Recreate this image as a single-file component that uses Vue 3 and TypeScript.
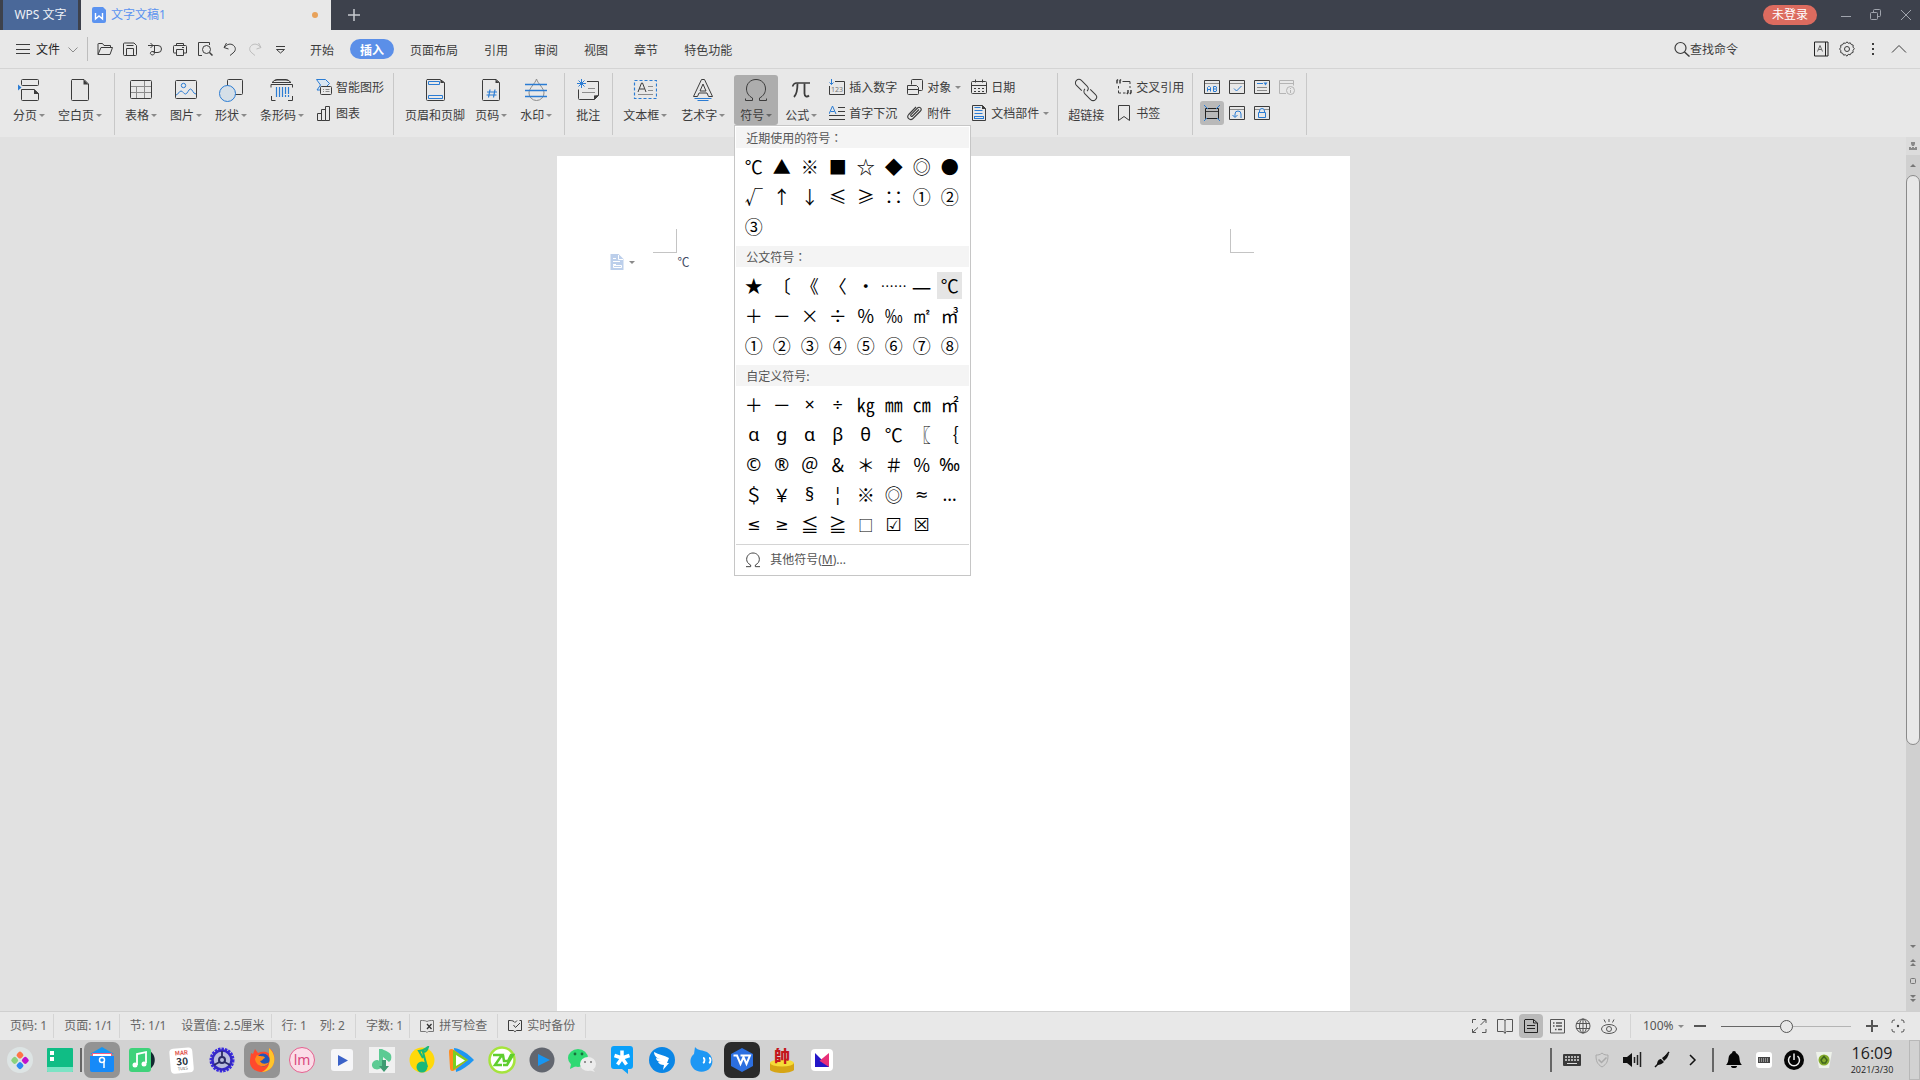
<script setup lang="ts">
import { h, ref } from 'vue'

interface IconDef {
  size: number
  body: string
}

const K = '#3c3c3c'
const B = '#2b7cd3'
const G = '#8c8c8c'

const L = (body: string): IconDef => ({ size: 24, body })
const S = (body: string): IconDef => ({ size: 16, body })
const T = (body: string): IconDef => ({ size: 28, body })

const icons: Record<string, IconDef> = {
  // large ribbon icons
  pageBreak: L(`<rect x="4.500" y="1.500" width="17" height="6" rx="1" stroke="${K}"/><path d="M4.500 11.500h12.500l4.500 4v6a1 1 0 0 1-1 1h-15a1 1 0 0 1-1-1z" stroke="${K}"/><path d="M17 11l5 5h-5z" fill="${K}"/><path d="M1 6.500l3.500 3-3.500 3z" fill="${B}"/>`),
  blankPage: L(`<path d="M4 1.500h12l4.500 4.500v15.500a1 1 0 0 1-1 1h-15a1 1 0 0 1-1-1v-19a1 1 0 0 1 1-1z" stroke="${K}"/><path d="M15.500 1.500v5h5z" fill="${K}"/>`),
  table: L(`<path d="M1.500 8.500h21M1.500 14.500h21M7.500 8v12.500M15.500 2.500v18" stroke="${G}"/><rect x="1.500" y="2.500" width="21" height="18" rx="1" stroke="${K}"/>`),
  picture: L(`<rect x="1.500" y="2.500" width="21" height="18" rx="1" stroke="${K}"/><circle cx="9.500" cy="7.500" r="2.200" stroke="${B}"/><path d="M2 17c2 0 3-4 5-4s2.500 3 4.500 3 3-5 5-5 2.500 5 5.500 5" stroke="${B}"/>`),
  shapes: L(`<rect x="8.500" y="1.500" width="15" height="15" rx="1" stroke="${K}"/><circle cx="8.500" cy="15.500" r="8" fill="#d5dfe8" stroke="${B}"/>`),
  barcode: L(`<path d="M2 4.500l3-2.500h13l3 2.500zM5 2.500l2-1h9l2 1" stroke="${K}"/><path d="M1 9.500v-3h21.500v3M1.500 18v4.500h4M18 22.500h4.500v-4.500" stroke="${K}"/><path d="M6.500 9v10M9.500 9v10M12.500 9v10M15.500 9v7M15.500 17v2M18.500 9v7M18.500 17v2" stroke="${B}" stroke-width="1.200"/>`),
  headerFooter: L(`<path d="M4 1.500h13l4.500 3v17a1 1 0 0 1-1 1h-16a1 1 0 0 1-1-1v-19a1 1 0 0 1 .5-1z" stroke="${K}"/><path d="M17.500 1.500v3.500h4z" fill="${K}"/><path d="M5.500 3.500h11v3h-11zM5.500 17.500h14v3h-14z" stroke="${B}"/>`),
  pageNumber: L(`<path d="M4 1.500h13l3.500 3v17a1 1 0 0 1-1 1h-15a1 1 0 0 1-1-1v-19a1 1 0 0 1 .5-1z" stroke="${K}"/><path d="M16.500 1.500v3.500h4z" fill="${K}"/><path d="M11 11.500l-1.500 8M16 11.500l-1.500 8M8 14h10M7.500 17h10" stroke="${B}" stroke-width="1.200"/>`),
  watermark: L(`<path d="M12.500 1c1.500 5 7.500 9 7.500 14a7.500 7.500 0 0 1-15 0c0-5 6-9 7.500-14z" stroke="${G}"/><path d="M1 6.500h22M1 12.500h22M1 18.500h22" stroke="${B}" stroke-width="1.300"/>`),
  comment: L(`<path d="M11 3.500h11.500v14l-4 4h-15a1 1 0 0 1-1-1v-9" stroke="${K}"/><path d="M23 17l-5 5v-4.500z" fill="${K}"/><path d="M12 10.500h7M6 14.500h13" stroke="${G}"/><path d="M5.500 1v9M1 5.500h9M2.500 2.500l6 6M8.500 2.500l-6 6" stroke="${B}"/>`),
  textBox: L(`<rect x="1.500" y="2.500" width="22" height="18" stroke="${B}" stroke-dasharray="3 2" stroke-width="1.200"/><path d="M5 14l3.500-9h1l3.500 9M6.500 11h5" stroke="${K}"/><path d="M15 8.500h5M15 12.500h5M5 16.500h15" stroke="${G}"/>`),
  wordArt: L(`<path d="M2.500 18.500L10.500 1.500h3L21.500 18.500h-4l-1.500-3.500H8L6.500 18.500z" stroke="${K}" stroke-linejoin="round"/><path d="M12 6l-3 7h6z" stroke="${K}"/><path d="M3.500 20.500h17M6.500 22.500h11" stroke="${B}"/>`),
  omega: L(`<path d="M1.500 22.500h7v-2.500C4.500 18 2.500 14.500 2.500 11c0-5.500 4-9.500 9.500-9.500s9.500 4 9.500 9.500c0 3.500-2 7-6 9v2.500h7M1.500 22.500v-2M22.500 22.500v-2" stroke="${K}"/>`),
  pi: L(`<path d="M3.500 8.500c1-3 2.500-3.500 4-3.500h13.500" stroke="${K}" stroke-width="1.500"/><path d="M8.500 5.500c0 7-1 11-3.500 13.500M15.500 5.500v10c0 3 2.500 4 4.500 2" stroke="${K}" stroke-width="1.800"/>`),
  link: L(`<g transform="rotate(45 12 12)" stroke="${K}"><path d="M9.500 15.500H2a3.500 3.500 0 0 1 0-7h8a3.500 3.500 0 0 1 3.500 3.500"/><path d="M14.500 8.500H22a3.500 3.500 0 0 1 0 7h-8a3.500 3.500 0 0 1-3.500-3.500"/></g>`),

  // small ribbon icons
  smartArt: S(`<path d="M.5.500h9l4 4-3 3H5.500V11H1l3.500-5z" fill="#d9e6f2" stroke="${B}"/><rect x="4.500" y="7.500" width="11" height="8" rx="1" fill="#e8e8e8" stroke="${K}"/><path d="M7 10.500h1M9.500 10.500h4M7 12.500h1M9.500 12.500h4" stroke="${G}"/>`),
  chart: S(`<path d="M1.500 15.500v-7h4v7zM5.500 15.500v-11h4v11zM9.500 15.500v-14h4v14z" stroke="${K}" stroke-linejoin="round"/>`),
  insertNum: S(`<path d="M6 2.500h9.500v13H.5V7" stroke="${K}"/><path d="M2.500 0v5.500M.5 3.500l2 2 2-2" stroke="${B}"/><text x="8" y="12.500" text-anchor="middle" font-family="Noto Sans" font-size="7" fill="#777">123</text>`),
  dropCap: S(`<path d="M0 9l3.500-8L7 9M1.500 6.500h4" stroke="${B}"/><path d="M9 2.500h7M9 6.500h7M0 10.500h16M0 14.500h16" stroke="${K}"/>`),
  object: S(`<path d="M4.500 5.500v-4a1 1 0 0 1 1-1h9a1 1 0 0 1 1 1v9a1 1 0 0 1-1 1h-3" stroke="${K}"/><path d="M.5 6.500h9l2 2v6a1 1 0 0 1-1 1H1.500a1 1 0 0 1-1-1zM.5 10.500h11" stroke="${K}"/>`),
  clip: S(`<path d="M12 4.500l-6.500 6.500c-1 1-2.500-.3-1.500-1.500L10.500 3c2-2 5 .8 3 3L6 13.500c-3 2.800-7-1-4.300-4L9 2" stroke="${K}" stroke-width="1.100"/>`),
  date: S(`<rect x=".5" y="2.500" width="15" height="12" rx="1" stroke="${K}"/><path d="M1 6.500h14" stroke="${K}"/><path d="M4.500.500v3M11.500.500v3M3 9.500h2M7 9.500h2M11 9.500h2M3 12.500h2M7 12.500h2M11 12.500h2" stroke="${K}"/>`),
  docPart: S(`<path d="M1.500.500h10l3 3v12h-13z" stroke="${K}"/><path d="M11 0l4 4h-4z" fill="${K}"/><path d="M3.500 2.500h6M3.500 5.500h8M3.500 8.500h8" stroke="${B}"/><rect x="3.500" y="11.500" width="9" height="2" stroke="${B}"/>`),
  crossRef: S(`<path d="M6.500 2.500h7.500v2.500M14 7v2M2.500 7v2.500M2.500 11.500v2.500h2.500M7 14h2.500" stroke="${K}"/><path d="M1 4.500v-3l1-1M4 4.500v-3l1-1M15 11v2.500l-1 1.500M12 11v2.500l-1 1.500" stroke="${K}" stroke-width="1.500"/>`),
  bookmark: S(`<path d="M2.500.500h11v15l-5.500-4-5.500 4z" stroke="${K}"/>`),
  fieldAB: S(`<path d="M.5 1.500h15v13H.5z" stroke="${K}"/><path d="M1 4.500h14" stroke="${G}"/><path d="M3.500 12.500v-4l1-1h1l1 1v4M3.500 10.500h3M9.500 7.500v5h2.500l.5-.5v-1.500l-.5-.5.5-.5v-1.500l-.5-.5h-2.500M9.500 10h2.500" stroke="${B}"/>`),
  fieldCheck: S(`<path d="M.5 1.500h15v13H.5z" stroke="${K}"/><path d="M1 4.500h14" stroke="${G}"/><path d="M5 9.500l2.500 2.500 5-5" stroke="${B}"/>`),
  fieldList: S(`<path d="M.5 1.500h15v13H.5z" stroke="${K}"/><path d="M3 4.500h6" stroke="${B}"/><path d="M9.500 3.500h4l-2 3z" fill="${B}"/><path d="M3 8.500h10M3 11.500h10" stroke="${G}"/>`),
  fieldInfo: S(`<path d="M7 14.500H.5v-13h14v5M1 4.500h14" stroke="#b4b4b4"/><circle cx="11.500" cy="11.500" r="4" stroke="#b4b4b4"/><path d="M11.500 9v1M11.500 11v3" stroke="#b4b4b4"/>`),
  fieldFrame: S(`<path d="M1.500 3.500h13v10h-13z" stroke="#222"/><path d="M2 6.500h12" stroke="${K}"/><path d="M0 0l4 4M16 0l-4 4M0 16l3-3M16 16l-3-3" stroke="${B}"/>`),
  fieldReset: S(`<path d="M.5 1.500h15v13H.5z" stroke="${K}"/><path d="M1 4.500h14" stroke="${G}"/><path d="M3.500 10l2.500 2.500 2.500-2.500M6 12V9a3 3 0 0 1 6 0v4" stroke="${B}"/>`),
  fieldLock: S(`<path d="M.5 1.500h15v13H.5z" stroke="${K}"/><path d="M1 4.500h14" stroke="${G}"/><path d="M4.500 7.500h7v5h-7zM5.500 7.500V6a2.500 2.500 0 0 1 5 0v1.500" fill="#e8e8e8" stroke="${B}"/>`),

  // quick access icons
  menu: S(`<path d="M1 3.500h14M1 8.500h14M1 12.500h14" stroke="${K}"/>`),
  chevDown: S(`<path d="M3.500 6.500l4.500 4.500 4.500-4.500" stroke="${G}"/>`),
  open: S(`<path d="M1 13.500V3a.5.500 0 0 1 .5-.5h4l1.500 2h6.500v2.500M1 13.500h12l2.500-7H4z" stroke="${K}" stroke-linejoin="round"/>`),
  save: S(`<path d="M2.500 2h9.500l2.500 2.500v9a1 1 0 0 1-1 1h-11a1 1 0 0 1-1-1V3a1 1 0 0 1 1-1zM4.500 14V7.500h7V14M4.500 4.500h7" stroke="${K}"/>`),
  pdf: S(`<path d="M1 4.500h10a3.500 3.500 0 0 1 0 7H6.500M3.500 2L6 4.500 3.500 7M7.500 4.500v7c0 4-5 2.500-4 0 .5-1 2-1 4-1" stroke="${K}"/>`),
  print: S(`<path d="M4.500 5V2.500h7V5M4 12H2a.5.500 0 0 1-.5-.5V5.500a1 1 0 0 1 1-1h11a1 1 0 0 1 1 1V12h-2.500M4.500 8.500h7v6h-7z" stroke="${K}"/><path d="M10 6.500h2" stroke="${K}"/>`),
  preview: S(`<path d="M5 14.500H1.500v-13h11V4" stroke="${K}"/><circle cx="9.500" cy="8.500" r="4" stroke="${K}"/><path d="M12.500 11.500l3 3" stroke="${K}" stroke-width="1.500"/>`),
  undo: S(`<path d="M4.500 2l-2.500 4.500 4.500 1.500M2.500 6.500c2-3 5-4 7.500-3 4 1.800 4.500 6 1 8.500L8 14.500" stroke="${K}"/>`),
  redo: S(`<path d="M11.500 2l2.500 4.500-4.500 1.500M13.500 6.500c-2-3-5-4-7.500-3-4 1.800-4.500 6-1 8.500L8 14.500" stroke="#bdbdbd"/>`),
  moreDown: S(`<path d="M4 5.500h9M4.500 8.500l4 3.500 4-3.500z" stroke="${K}"/>`),
  search: S(`<circle cx="6.500" cy="7" r="5.500" stroke="${K}" stroke-width="1.200"/><path d="M10.500 11l5 4.500" stroke="${K}" stroke-width="1.500"/>`),
  layoutA: S(`<path d="M1.500 1h13.500v14h-13.500zM12.500 1v14" stroke="#222"/><path d="M4.500 10.500l2.500-6 2.500 6M5.500 8.500h3" stroke="#666"/>`),
  gear: S(`<circle cx="8" cy="8" r="2.500" stroke="${K}"/><path d="M8 .8l1.300 1.500 2-.5.9 1.700 2 .6-.2 2 1.300 1.600-1.300 1.700.1 2-1.900.7-1 1.700-2-.5L8 15.200l-1.500-1.400-2 .3-.8-1.800-2-.7.1-2L.6 8l1.200-1.700-.1-2 2-.6.9-1.700 2 .3z" stroke="${K}" stroke-linejoin="round"/>`),
  dots: S(`<path d="M7 2h2v2H7zM7 7h2v2H7zM7 12h2v2H7z" fill="${K}"/>`),
  chevUp: S(`<path d="M1 11.500l7-7 7 7" stroke="${K}"/>`),
  plus: S(`<path d="M2 8h12M8 2v12" stroke="#c8cad0" stroke-width="1.500"/>`),
  minimize: S(`<path d="M3 9.500h10" stroke="#a0a4ad"/>`),
  restore: S(`<rect x="2.500" y="5.500" width="7" height="7" rx="1" stroke="#a0a4ad"/><path d="M5.500 5.500v-2a1 1 0 0 1 1-1h5a1 1 0 0 1 1 1v5a1 1 0 0 1-1 1h-2" stroke="#a0a4ad"/>`),
  close: S(`<path d="M3 3l10 10M13 3L3 13" stroke="#a0a4ad"/>`),
  wdoc: S(`<path d="M3 0h9l3 3v11a2 2 0 0 1-2 2H3a2 2 0 0 1-2-2V2a2 2 0 0 1 2-2z" fill="#5b93f0"/><path d="M4.500 6v6l3.500-3 3.500 3V6" stroke="#fff" stroke-width="1.400"/>`),

  // status bar icons
  spell: S(`<path d="M8 3.500c-1.500-1-4-1-6.500-1v11h5c1 0 1 1 1.500 1s.5-1 1.500-1h5v-11c-2.500 0-5 0-6.500 1z" stroke="#777"/><path d="M8 6l4.500 5M12.500 6L8 11" stroke="#333" stroke-width="1.300"/>`),
  backup: S(`<path d="M7 3.500c-1.500-1-3-1-5.500-1v10h5c1 0 1 1.500 1.500 1.500s.5-1.500 1.500-1.500h5v-10h-2M7 3.500l1 1 2-2" stroke="${K}"/><path d="M6.500 7l2 2.500 4.500-4.500" stroke="${K}"/>`),
  full: S(`<path d="M1.500 5V1.500H5M11 1.500h4V5M15 11v3.500h-4M5 14.500H1.500V11M9.500 7l5-5M7 9.500l-5.500 5" stroke="#555"/>`),
  book: S(`<path d="M8 15.500V2.500L6.500 1.500h-6v12h6zM8 2.500l1.500-1h6v12h-6L8 15" stroke="#555"/>`),
  pageView: S(`<path d="M2 1.500h8.500L14.500 5v9.500H1.500V2zM10.500 1.500V5h4M4 7.500h8M4 10.500h8" stroke="#222"/>`),
  outline: S(`<path d="M1.500 1.500h14v13.500h-14z" stroke="#555"/><path d="M4 5h1.500M4 8h1.500M6 11.500h1.500M7 5h6M7 8h6M9 11.500h4" stroke="#555" stroke-width="1.300"/>`),
  globe: S(`<circle cx="8" cy="8" r="7" stroke="#555"/><ellipse cx="8" cy="8" rx="3.500" ry="7" stroke="#555"/><path d="M1 5.500h14M1 10.500h14M8 1v14" stroke="#555"/>`),
  eye: S(`<ellipse cx="8" cy="11" rx="7.500" ry="4.500" stroke="#555"/><circle cx="8" cy="11" r="2.500" stroke="#555"/><path d="M8 1v3M3 1.500l1.500 3M13 1.500l-1.500 3" stroke="#555"/>`),
  minusBold: S(`<path d="M2 8h12" stroke="#555" stroke-width="2"/>`),
  plusBold: S(`<path d="M2 8h12M8 2v12" stroke="#555" stroke-width="2"/>`),
  focus: S(`<path d="M2 5V4a2 2 0 0 1 2-2h1M11 2h1a2 2 0 0 1 2 2v1M14 11v1a2 2 0 0 1-2 2h-1M5 14H4a2 2 0 0 1-2-2v-1" stroke="#555"/><circle cx="8" cy="8" r="1.200" fill="#444"/>`),
  para: S(`<path d="M1.500 0h8l5 5v11h-13z" fill="#bccfeb"/><path d="M9.500 1v4.500h4.500M4 4.500h3M4 7.500h7M4 10.500h3M4.500 11.500h8v2h-8z" stroke="#fff"/>`),

  // taskbar application icons
  launcher: T(`<circle cx="14" cy="14" r="13" fill="#dde4e4"/><g transform="rotate(45 14 14)"><rect x="7.500" y="7.500" width="6" height="6" rx="2" fill="#ff7446"/><rect x="15" y="7.500" width="6" height="6" rx="2" fill="#c012cc"/><rect x="7.500" y="15" width="6" height="6" rx="2" fill="#8ad27c"/><rect x="15" y="15" width="6" height="6" rx="2" fill="#2c88f2"/></g>`),
  multitask: T(`<rect x="1" y="2" width="26" height="24" rx="1" fill="#10bd85"/><path d="M1 21h26v4a1 1 0 0 1-1 1H2a1 1 0 0 1-1-1z" fill="#7be3c4"/><path d="M4 5h4v4H4zM4 11h4v4H4z" fill="#fff"/>`),
  files: T(`<path d="M2 8l12-7 12 7z" fill="#1597f5"/><path d="M4 7h20v6H4z" fill="#f65c82"/><path d="M5 8h18v6H5z" fill="#fff"/><path d="M2 10h24v14a2 2 0 0 1-2 2H4a2 2 0 0 1-2-2z" fill="#168af8"/><circle cx="14" cy="14" r="2.500" stroke="#fff" stroke-width="1.500"/><path d="M16 15v7" stroke="#fff" stroke-width="1.500"/>`),
  music: T(`<path d="M20 4c9 4 9 16 0 20z" fill="#142830"/><rect x="1" y="2" width="22" height="24" rx="3" fill="#3fd27a"/><path d="M9 19V8l9-2v11" stroke="#fff" stroke-width="1.800"/><circle cx="7" cy="19" r="2.500" fill="#fff"/><circle cx="16" cy="18" r="2.500" fill="#fff"/>`),
  calendar: T(`<g transform="rotate(-5 14 14)"><rect x="2" y="2" width="23" height="25" rx="4" fill="#fff"/><text x="14" y="9" text-anchor="middle" font-size="6" font-weight="700" fill="#e0524a">MAR</text><text x="14" y="19" text-anchor="middle" font-size="10" font-weight="700" fill="#26323f">30</text><text x="14" y="24" text-anchor="middle" font-size="4" fill="#555">TUES</text></g>`),
  settings: T(`<circle cx="14" cy="14" r="11" stroke="#3a2be2" stroke-width="3" stroke-dasharray="2.400 1"/><circle cx="14" cy="14" r="9.500" fill="#b9bcdc" stroke="#3427c4" stroke-width="2.500"/><circle cx="14" cy="14" r="3" stroke="#2b2b66" stroke-width="2"/><path d="M14 11V5M11.500 16L6 19M16.500 16l5.500 3" stroke="#2b2b66" stroke-width="1.800"/>`),
  firefox: T(`<path d="M3 7l2 1 2-5 3 4c6-3 12 0 13 3l-2-8c5 3 6 9 5 14-2 8-8 10-13 10S1 22 2 14z" fill="#ff4a2d"/><path d="M21 2c6 5 7 13 3 19-3 4-8 5-10 5 6-3 9-9 7-17z" fill="#ffc52b"/><circle cx="15" cy="14" r="6.500" fill="#2255b8"/><path d="M9 9c3 2 7 0 8 3-2 0-2 3-5 3 2 4 7 3 9 1-3 7-13 5-14-3z" fill="#ff8a1c"/>`),
  lm: T(`<circle cx="14" cy="14" r="12.500" fill="#fbdde8" stroke="#e5608f"/><text x="14" y="19" text-anchor="middle" font-family="Noto Sans" font-size="14" fill="#d9487e">lm</text>`),
  player: T(`<rect x="3" y="3" width="22" height="22" rx="3" fill="#f6f6f8"/><path d="M10 9l10 5.500L10 20z" fill="#3b62c8"/>`),
  download: T(`<rect x="1" y="1" width="26" height="26" fill="#f0f0f0"/><path d="M14 3c5 3 11 3 9 11l-2 2-6-5v8c-1 6-12 6-11-1 1-4 6-5 7-3V3z" fill="#5ccb93"/><path d="M14 14h4v6h3l-5 6-5-6h3z" fill="#3e9b72"/>`),
  qqmusic: T(`<circle cx="14" cy="14" r="12.500" fill="#ffd90a"/><path d="M15 12l-4-7c5 0 6-2 9-4-1 4-2 5-5 5l4 15" stroke="#18b87a" stroke-width="2"/><circle cx="14" cy="21" r="5.500" fill="#18b87a"/>`),
  tencent: T(`<path d="M6 2c8 1 14 6 20 12-6 6-12 10-18 12z" fill="#1d97f3"/><path d="M1 6c0-4 3-3 5-2l14 10L7 24c-3 2-5 1-5-2z" fill="#ff8c1c"/><path d="M5 4l15 10L5 24z" fill="#78d01f"/><path d="M8 9l9 5.500L8 20z" fill="#fff"/>`),
  zy: T(`<circle cx="14" cy="14" r="12.500" fill="#fff" stroke="#a5e43c" stroke-width="2.500"/><path d="M5 9h9L7 19h7M15 9l1 6h4l3-6h2l-6 10h-4" stroke="#5fce2f" stroke-width="2.500"/>`),
  video: T(`<circle cx="14" cy="14" r="12.500" fill="#62666f"/><path d="M10 8l12 6-12 6z" fill="#1796f2"/>`),
  wechat: T(`<ellipse cx="10" cy="12" rx="10" ry="9" fill="#2fd973"/><path d="M3 18l-1 5 6-3z" fill="#2fd973"/><circle cx="7" cy="8" r="1.400" fill="#18703c"/><circle cx="14" cy="8" r="1.400" fill="#18703c"/><ellipse cx="20" cy="18" rx="8" ry="7" fill="#ececec"/><path d="M24 22l3 4-6-2z" fill="#ececec"/><circle cx="17" cy="16" r="1" fill="#777"/><circle cx="23" cy="16" r="1" fill="#777"/>`),
  star: T(`<path d="M6 0h16a3 3 0 0 1 3 3v17a3 3 0 0 1-3 3h-2v5l-6-5H6a3 3 0 0 1-3-3V3a3 3 0 0 1 3-3z" fill="#0aa0fa"/><path d="M14 12V4.500M14 12l7.500-2.500M14 12l4.500 6.500M14 12l-4.500 6.500M14 12L6.500 9.500" stroke="#fff" stroke-width="3.500"/>`),
  dingtalk: T(`<circle cx="14" cy="14" r="13" fill="#0a86e6"/><path d="M6 6c5 3 10 3 15 6l-2 5h2l-6 7 1-5c-3 0-5-1-6-3l3 0c-3 0-5-2-5-4l4 1c-4-1-6-4-6-7z" fill="#fff"/>`),
  drop: T(`<path d="M7 1c3 4 8 3 12 5 6 4 7 11 3 16s-13 5-17 0C1 17 2 11 6 8z" fill="#1d97f4"/><path d="M15 12c2 0 2 4 0 5M21 12c2 0 2 4 0 5" stroke="#fff" stroke-width="1.800"/>`),
  wps: T(`<path d="M14 2l11 6v12l-11 6-11-6V8z" fill="#2c6fe0"/><path d="M5.500 9.500h3.500l3.500 8.500 3-7 3 7 3.500-8.500H12.500" stroke="#fff" stroke-width="2"/>`),
  chess: T(`<path d="M2 17h24v7c-4 4-20 4-24 0z" fill="#d6a514"/><ellipse cx="14" cy="17" rx="12" ry="3.500" fill="#f6dc38"/><text x="14" y="16" text-anchor="middle" font-size="16" font-weight="900" fill="#c4171c">帥</text>`),
  mail: T(`<rect x="3" y="3" width="22" height="22" rx="4" fill="#fff"/><path d="M7 7l14 14H7z" fill="#2416c8"/><path d="M21 7L10 16l4 5h7z" fill="#e82f78"/><path d="M7 12v9h14z" fill="#2416c8"/>`),

  // tray icons
  keyboard: T(`<rect x="5" y="8" width="18" height="12" rx="1" fill="#3a3a3a"/><path d="M7 11h14M7 14h14" stroke="#ddd" stroke-width="1.500" stroke-dasharray="2 1"/><path d="M9 17.500h10" stroke="#ddd"/>`),
  shield: T(`<path d="M14 7c2 2 4 2 6 2 0 6-1 9-6 12-5-3-6-6-6-12 2 0 4 0 6-2z" stroke="#aaa"/><path d="M10.500 13.500l3 3 5-5" stroke="#aaa" stroke-width="1.500"/>`),
  speaker: T(`<path d="M5 11h4l5-4v14l-5-4H5z" fill="#111"/><path d="M16.500 11v6M19.500 9v10M22.500 6v15" stroke="#222" stroke-width="1.500"/>`),
  plug: T(`<path d="M7 21l4-4M17 11l4-5" stroke="#111" stroke-width="1.500"/><path d="M9 19c0-4 2-6 4-6l3 3c-2 2-4 3-7 3zM14 12l4-3 3-1-2 4-3 3z" fill="#111"/>`),
  chevRight: T(`<path d="M12 9l5 5-5 5" stroke="#111" stroke-width="1.500"/>`),
  bell: T(`<path d="M6 19c3-3 2-6 3-9 1-2 3-3 3-3a2 2 0 0 1 4 0s2 1 3 3c1 3 0 6 3 9zM11 20h6a3 2 0 0 1-6 0z" fill="#050505"/>`),
  keyboardW: T(`<rect x="6" y="6" width="16" height="16" rx="3" fill="#fff"/><rect x="8" y="11" width="12" height="6" fill="#444"/><path d="M9 13h10M9 15h10" stroke="#ddd" stroke-dasharray="1 1"/>`),
  power: T(`<circle cx="14" cy="14" r="10" fill="#050505"/><path d="M10.500 10a5.500 5.500 0 1 0 7 0M14 7.500V14" stroke="#eee" stroke-width="1.500"/>`),
  bin: T(`<path d="M6 6h16l-3 16H9z" fill="#eef2ea"/><circle cx="14" cy="14" r="5.500" fill="#84ab2c"/><path d="M11 14l3-3.500 3 3.500-1.500 3h-3z" stroke="#3f661c" stroke-width="1.500"/>`),
}

const Icon = (props: { name: string }) => {
  const d = icons[props.name]
  return h('svg', {
    class: 'icon',
    width: d.size,
    height: d.size,
    viewBox: `0 0 ${d.size} ${d.size}`,
    fill: 'none',
    'aria-hidden': 'true',
    innerHTML: d.body,
  })
}
Icon.props = ['name']

interface Tool {
  label: string
  icon: string
  arrow?: boolean
}

const quick = [
  ['open', '打开'], ['save', '保存'], ['pdf', '输出为PDF'], ['print', '打印'],
  ['preview', '打印预览'], ['undo', '撤销'], ['redo', '恢复'], ['moreDown', '自定义快速访问工具栏'],
]
const tabs = ['开始', '插入', '页面布局', '引用', '审阅', '视图', '章节', '特色功能']
const activeTab = ref('插入')

const pageTools: Tool[] = [
  { label: '分页', icon: 'pageBreak', arrow: true },
  { label: '空白页', icon: 'blankPage', arrow: true },
]
const mediaTools: Tool[] = [
  { label: '表格', icon: 'table', arrow: true },
  { label: '图片', icon: 'picture', arrow: true },
  { label: '形状', icon: 'shapes', arrow: true },
  { label: '条形码', icon: 'barcode', arrow: true },
]
const mediaSmall: Tool[] = [
  { label: '智能图形', icon: 'smartArt' },
  { label: '图表', icon: 'chart' },
]
const textTools: Tool[] = [
  { label: '文本框', icon: 'textBox', arrow: true },
  { label: '艺术字', icon: 'wordArt', arrow: true },
]
const smallColumns: Tool[][] = [
  [{ label: '插入数字', icon: 'insertNum' }, { label: '首字下沉', icon: 'dropCap' }],
  [{ label: '对象', icon: 'object', arrow: true }, { label: '附件', icon: 'clip' }],
  [{ label: '日期', icon: 'date' }, { label: '文档部件', icon: 'docPart', arrow: true }],
]
const linkSmall: Tool[] = [
  { label: '交叉引用', icon: 'crossRef' },
  { label: '书签', icon: 'bookmark' },
]
const fields = [
  ['fieldAB', '文字型窗体域'], ['fieldCheck', '复选框型窗体域'], ['fieldList', '下拉型窗体域'], ['fieldInfo', '窗体域选项'],
  ['fieldFrame', '窗体域底纹'], ['fieldReset', '重新设置窗体域'], ['fieldLock', '保护窗体'],
]

interface Sym {
  c: string
  k?: string
}
const sym = (text: string, k = ''): Sym[] => text.split(' ').map((c) => ({ c, k }))

const symbolGroups: { title: string; items: Sym[] }[] = [
  { title: '近期使用的符号：', items: sym('℃ ▲ ※ ■ ☆ ◆ ◎ ● √ ↑ ↓ ≤ ≥ ∷ ① ② ③') },
  {
    title: '公文符号：',
    items: [
      ...sym('★ 〔 《 〈 ·'), ...sym('……', 'tiny'), ...sym('—', 'wide'), ...sym('℃', 'hover'),
      ...sym('＋ － × ÷ ％ ‰'), ...sym('㎡', 'serif'), ...sym('㎥ ① ② ③ ④ ⑤ ⑥ ⑦ ⑧'),
    ],
  },
  {
    title: '自定义符号:',
    items: [
      ...sym('＋ －'), ...sym('× ÷', 'latin'), ...sym('㎏ ㎜ ㎝ ㎡'),
      ...sym('ɑ ɡ α β θ', 'latin'), ...sym('℃ 〖 ｛'), ...sym('© ®', 'latin'), ...sym('＠ ＆ ＊ ＃ ％'), ...sym('‰', 'latin'),
      ...sym('＄ ￥'), ...sym('§ ¦', 'latin'), ...sym('※ ◎'), ...sym('≈', 'math'), ...sym('…', 'latin'),
      ...sym('≤ ≥', 'math'), ...sym('≦ ≧'), ...sym('□', 'box'), ...sym('☑ ☒', 'check'),
    ],
  },
]

const apps: { icon: string; state?: string }[] = [
  { icon: 'files', state: 'open' }, { icon: 'music' }, { icon: 'calendar' }, { icon: 'settings' },
  { icon: 'firefox', state: 'open' }, { icon: 'lm' }, { icon: 'player' }, { icon: 'download' },
  { icon: 'qqmusic' }, { icon: 'tencent' }, { icon: 'zy' }, { icon: 'video' }, { icon: 'wechat' },
  { icon: 'star' }, { icon: 'dingtalk' }, { icon: 'drop' }, { icon: 'wps', state: 'current' },
  { icon: 'chess' }, { icon: 'mail' },
]
const tray = ['keyboard', 'shield', 'speaker', 'plug', 'chevRight']
const tray2 = ['bell', 'keyboardW', 'power', 'bin']

const views = [
  ['full', '全屏显示'], ['book', '阅读版式'], ['pageView', '页面视图'],
  ['outline', '大纲视图'], ['globe', 'Web版式'], ['eye', '护眼模式'],
]
const zoom = ref(50)
</script>

<template>
  <div class="app">
    <header class="titlebar">
      <button class="home-tab">WPS 文字</button>
      <button class="doc-tab"><Icon name="wdoc" /><span>文字文稿1</span><i class="dirty"></i></button>
      <button class="new-tab" aria-label="新建"><Icon name="plus" /></button>
      <div class="window-actions">
        <button class="login">未登录</button>
        <button class="win" aria-label="最小化"><Icon name="minimize" /></button>
        <button class="win" aria-label="还原"><Icon name="restore" /></button>
        <button class="win" aria-label="关闭"><Icon name="close" /></button>
      </div>
    </header>

    <nav class="menubar">
      <button class="file"><Icon name="menu" /><span>文件</span><Icon name="chevDown" /></button>
      <div class="quick">
        <button v-for="[icon, label] in quick" :key="icon" :aria-label="label"><Icon :name="icon" /></button>
      </div>
      <div class="tabs">
        <button v-for="t in tabs" :key="t" :class="{ active: t === activeTab }" @click="activeTab = t">{{ t }}</button>
      </div>
      <label class="find"><Icon name="search" /><input type="text" placeholder="查找命令" aria-label="查找命令" /></label>
      <div class="menu-right">
        <button aria-label="界面"><Icon name="layoutA" /></button>
        <button aria-label="设置"><Icon name="gear" /></button>
        <button aria-label="更多"><Icon name="dots" /></button>
        <button aria-label="折叠功能区"><Icon name="chevUp" /></button>
      </div>
    </nav>

    <section class="ribbon">
      <div class="group first">
        <button v-for="t in pageTools" :key="t.label" class="big"><Icon :name="t.icon" /><span class="cap">{{ t.label }}<i class="arrow"></i></span></button>
      </div>
      <div class="group media">
        <button v-for="t in mediaTools" :key="t.label" class="big"><Icon :name="t.icon" /><span class="cap">{{ t.label }}<i class="arrow"></i></span></button>
        <div class="col">
          <button v-for="t in mediaSmall" :key="t.label" class="small"><Icon :name="t.icon" />{{ t.label }}</button>
        </div>
      </div>
      <div class="group">
        <button class="big tight"><Icon name="headerFooter" /><span class="cap">页眉和页脚</span></button>
        <button class="big"><Icon name="pageNumber" /><span class="cap">页码<i class="arrow"></i></span></button>
        <button class="big"><Icon name="watermark" /><span class="cap">水印<i class="arrow"></i></span></button>
      </div>
      <div class="group">
        <button class="big"><Icon name="comment" /><span class="cap">批注</span></button>
      </div>
      <div class="group text">
        <button v-for="t in textTools" :key="t.label" class="big"><Icon :name="t.icon" /><span class="cap">{{ t.label }}<i class="arrow"></i></span></button>
        <div class="symbol">
          <button class="big pressed"><Icon name="omega" /><span class="cap">符号<i class="arrow"></i></span></button>
          <div class="panel">
            <section v-for="g in symbolGroups" :key="g.title">
              <h3>{{ g.title }}</h3>
              <div class="grid">
                <button v-for="(s, i) in g.items" :key="i" :class="s.k">{{ s.c }}</button>
              </div>
            </section>
            <button class="more"><svg width="16" height="16" viewBox="0 0 24 24" fill="none" stroke="#444" stroke-width="1.500" aria-hidden="true"><path d="M1.500 22h7v-2.500C4.500 17.500 2.500 14.500 2.500 11c0-5.500 4-9.500 9.500-9.500s9.500 4 9.500 9.500c0 3.500-2 6.500-6 8.500V22h7" /></svg><span>其他符号(<u>M</u>)...</span></button>
          </div>
        </div>
        <button class="big"><Icon name="pi" /><span class="cap">公式<i class="arrow"></i></span></button>
        <div v-for="(c, i) in smallColumns" :key="i" class="col">
          <button v-for="t in c" :key="t.label" class="small"><Icon :name="t.icon" />{{ t.label }}<i v-if="t.arrow" class="arrow"></i></button>
        </div>
      </div>
      <div class="group text">
        <button class="big"><Icon name="link" /><span class="cap">超链接</span></button>
        <div class="col">
          <button v-for="t in linkSmall" :key="t.label" class="small"><Icon :name="t.icon" />{{ t.label }}</button>
        </div>
      </div>
      <div class="group fields">
        <button v-for="[icon, label] in fields" :key="icon" :class="{ on: icon === 'fieldFrame' }" :aria-label="label"><Icon :name="icon" /></button>
      </div>
    </section>

    <main class="workspace">
      <div class="canvas">
        <article class="page">
          <i class="corner left"></i>
          <i class="corner right"></i>
          <div class="line">
            <button class="para" aria-label="段落布局"><Icon name="para" /><i class="arrow"></i></button>
            <p>℃</p>
          </div>
        </article>
      </div>
      <div class="scroll">
        <button class="ruler" aria-label="标尺"><svg width="8" height="8" fill="#8a8a8a" aria-hidden="true"><path d="M2 0h4v2l-1 2H3L2 2zM0 5h2v1h1V5h2v1h1V5h2v3H0z" /></svg></button>
        <button class="up" aria-label="向上滚动"><svg width="6" height="3" fill="#777" aria-hidden="true"><path d="M3 0l3 3H0z" /></svg></button>
        <div class="track"><div class="thumb"></div></div>
        <div class="nav">
          <svg width="6" height="3" fill="#777"><path d="M0 0h6L3 3z" /></svg>
          <svg width="6" height="8" fill="#777"><path d="M3 0l3 3H0zM3 4l3 3H0z" /></svg>
          <svg width="6" height="6" fill="none" stroke="#777"><rect x=".5" y=".5" width="5" height="5" rx="1" /></svg>
          <svg width="6" height="8" fill="#777"><path d="M0 0h6L3 3zM0 4h6L3 7z" /></svg>
        </div>
      </div>
    </main>

    <footer class="status">
      <span class="cell">页码: 1</span>
      <span class="cell">页面: 1/1</span>
      <span class="cell wide"><span>节: 1/1</span><span>设置值: 2.5厘米</span></span>
      <span class="cell pos"><span>行: 1</span><span>列: 2</span></span>
      <span class="cell">字数: 1</span>
      <button class="cell check"><Icon name="spell" />拼写检查</button>
      <button class="cell check"><Icon name="backup" />实时备份</button>
      <div class="views">
        <button v-for="[icon, label] in views" :key="icon" :class="{ on: icon === 'pageView' }" :aria-label="label"><Icon :name="icon" /></button>
      </div>
      <div class="zoom">
        <label class="pct"><select aria-label="显示比例"><option>100%</option></select><i class="arrow"></i></label>
        <button aria-label="缩小"><Icon name="minusBold" /></button>
        <input v-model="zoom" type="range" min="0" max="100" aria-label="缩放" />
        <button aria-label="放大"><Icon name="plusBold" /></button>
        <button aria-label="最佳显示"><Icon name="focus" /></button>
      </div>
    </footer>

    <div class="taskbar">
      <button class="app-btn" aria-label="启动器"><Icon name="launcher" /></button>
      <button class="app-btn" aria-label="多任务视图"><Icon name="multitask" /></button>
      <i class="bar"></i>
      <button v-for="a in apps" :key="a.icon" class="app-btn" :class="a.state" :aria-label="a.icon"><span><Icon :name="a.icon" /></span></button>
      <div class="tray">
        <i class="bar"></i>
        <div class="tray-set"><button v-for="t in tray" :key="t" :aria-label="t"><Icon :name="t" /></button></div>
        <i class="bar"></i>
        <div class="tray-set"><button v-for="t in tray2" :key="t" :aria-label="t"><Icon :name="t" /></button></div>
        <div class="clock"><b>16:09</b><span>2021/3/30</span></div>
        <button class="desktop" aria-label="显示桌面"></button>
      </div>
    </div>
  </div>
</template>

<style>
body {
  background: #e1e1e1;
}
</style>

<style scoped>
.app {
  display: flex;
  flex-direction: column;
  height: 100vh;
  overflow: hidden;
  font: 12px/16px "Noto Sans CJK SC", "Noto Sans", sans-serif;
  color: #3c3c3c;
}
.icon {
  display: block;
  flex: none;
}
button {
  display: flex;
  align-items: center;
  justify-content: center;
  margin: 0;
  padding: 0;
  border: 0;
  background: none;
  font: inherit;
  color: inherit;
  white-space: nowrap;
}
.arrow {
  display: block;
  flex: none;
  width: 0;
  border: solid transparent;
  border-width: 3px 3px 0;
  border-top-color: #8a8a8a;
}

/* title bar */
.titlebar {
  display: flex;
  flex: none;
  height: 30px;
  padding-left: 3px;
  background: #3d414c;
  font-family: "Noto Sans", "Noto Sans CJK SC", sans-serif;
}
.home-tab {
  width: 75px;
  margin-right: 3px;
  background: #4a6899;
  color: #eef1f6;
}
.doc-tab {
  justify-content: flex-start;
  gap: 4px;
  width: 250px;
  padding: 0 13px 0 10px;
  background: #e8e8e8;
  color: #5b93f0;
}
.dirty {
  width: 6px;
  height: 6px;
  margin-left: auto;
  border-radius: 50%;
  background: #e8a25a;
}
.new-tab {
  width: 46px;
}
.window-actions {
  display: flex;
  align-items: center;
  margin-left: auto;
}
.login {
  width: 54px;
  height: 20px;
  margin-right: 14px;
  border-radius: 10px;
  background: #dc6b5f;
  color: #fff;
}
.win {
  width: 30px;
  height: 30px;
}
.win:last-child {
  width: 29px;
}

/* menu bar */
.menubar {
  display: flex;
  flex: none;
  align-items: center;
  height: 38px;
  border-bottom: 1px solid #d4d4d4;
  background: #e8e8e8;
}
.file {
  gap: 5px;
  height: 24px;
  padding: 0 6px 0 15px;
  border-right: 1px solid #bdbdbd;
  color: #222;
}
.quick {
  display: flex;
  padding: 0 8px 0 4px;
}
.quick button {
  width: 25px;
  height: 24px;
}
.tabs {
  display: flex;
  gap: 6px;
}
.tabs button {
  height: 20px;
  padding: 2px 10px 0;
  border-radius: 10px;
  box-sizing: border-box;
}
.tabs .active {
  background: #5b8fe8;
  color: #fff;
  font-weight: 700;
}
.find {
  display: flex;
  align-items: center;
  margin-left: auto;
  padding-right: 69px;
}
.find input {
  width: 54px;
  padding: 0;
  border: 0;
  background: none;
  font: inherit;
}
.find input::placeholder {
  color: #3c3c3c;
  opacity: 1;
}
.menu-right {
  display: flex;
  gap: 10px;
  padding-right: 13px;
}

/* ribbon */
.ribbon {
  display: flex;
  flex: none;
  height: 68px;
  background: #e8e8e8;
}
.group {
  display: flex;
  gap: 3px;
  height: 62px;
  margin: 4px 0 2px;
  padding: 2px 7px 0 6px;
  border-right: 1px solid #c8c8c8;
  box-sizing: border-box;
}
.group.first {
  padding-left: 8px;
}
.group.media {
  padding: 2px 6px 0 5px;
}
.group.text {
  gap: 4px;
  padding: 2px 5px 0;
}
.big {
  flex-direction: column;
  justify-content: flex-start;
  gap: 5px;
  height: 50px;
  padding: 3px 5px 0;
  box-sizing: border-box;
  border-radius: 3px;
}
.big.tight {
  padding-right: 2px;
}
.big.pressed {
  padding: 3px 6px 0;
  background: #adadad;
}
.pressed .arrow {
  border-top-color: #666;
}
.cap {
  display: flex;
  align-items: center;
  gap: 2px;
}
.symbol {
  position: relative;
  margin-right: -2px;
}
.col {
  display: flex;
  flex-direction: column;
  gap: 2px;
  padding: 0 3px;
}
.media .col {
  padding-left: 4px;
}
.small {
  justify-content: flex-start;
  gap: 4px;
  height: 24px;
}
.group.fields {
  display: grid;
  grid-template-columns: repeat(4, 24px);
  grid-auto-rows: 24px;
  gap: 2px 1px;
  padding: 2px 7px 0;
}
.fields .on {
  border-radius: 3px;
  background: #b9b9b9;
}

/* symbol panel */
.panel {
  position: absolute;
  z-index: 5;
  top: 50px;
  left: 0;
  width: 233px;
  padding: 1px 1px 0;
  border: 1px solid #c6c6c6;
  background: #fff;
}
.panel h3 {
  margin: 0;
  padding: 1px 10px 0;
  background: #f4f4f4;
  color: #555;
  font: 12px/20px "Noto Sans CJK JP", sans-serif;
}
.grid {
  display: grid;
  grid-template-columns: repeat(8, 25px);
  grid-auto-rows: 27px;
  gap: 3px;
  padding: 5px 5px 6px;
}
.grid button {
  color: #000;
  font-size: 18px;
  line-height: 27px;
}
.grid .hover {
  background: #e5e5e5;
}
.grid .tiny {
  font-size: 13px;
}
.grid .wide,
.grid .serif {
  font-size: 22px;
}
.grid .serif {
  font-family: "Liberation Serif", serif;
}
.grid .latin {
  font-family: "Noto Sans", "Noto Sans CJK SC", sans-serif;
}
.grid .math {
  font-family: "DejaVu Sans", sans-serif;
  font-size: 16px;
}
.grid .box {
  font-size: 15px;
}
.grid .check {
  font-family: "DejaVu Sans", sans-serif;
}
.more {
  justify-content: flex-start;
  gap: 9px;
  width: 100%;
  height: 31px;
  padding-left: 9px;
  border-top: 1px solid #d4d4d4;
  color: #555;
  font-family: "Noto Sans", "Noto Sans CJK SC", sans-serif;
}

/* document */
.workspace {
  display: flex;
  flex: 1;
  min-height: 0;
  background: #e1e1e1;
}
.canvas {
  display: flex;
  flex: 1;
  justify-content: center;
  padding-top: 19px;
}
.page {
  position: relative;
  width: 793px;
  background: #fff;
}
.corner {
  position: absolute;
  top: 73px;
  width: 23px;
  height: 23px;
  border: solid #c4c4c4;
}
.corner.left {
  left: 96px;
  border-width: 0 1px 1px 0;
}
.corner.right {
  right: 96px;
  border-width: 0 0 1px 1px;
}
.line {
  display: flex;
  align-items: center;
  padding: 98px 0 0 52px;
}
.line p {
  margin: 0 0 0 43px;
  color: #444c66;
  font-size: 12px;
}
.para {
  gap: 4px;
}
.scroll {
  display: flex;
  flex-direction: column;
  width: 14px;
  background: #d0d0d0;
}
.ruler {
  height: 18px;
  background: #dcdcdc;
}
.up {
  height: 20px;
}
.track {
  flex: 1;
}
.thumb {
  height: 74%;
  border: 1px solid #8a8a8a;
  border-radius: 7px;
  background: #e8e8e8;
  box-sizing: border-box;
}
.nav {
  display: flex;
  flex-direction: column;
  align-items: center;
  gap: 11px;
  padding-bottom: 8px;
}

/* status bar */
.status {
  display: flex;
  flex: none;
  align-items: center;
  height: 28px;
  border-top: 1px solid #cfcfcf;
  background: #e8e8e8;
  color: #666;
  font-family: "Noto Sans", "Noto Sans CJK SC", sans-serif;
}
.cell {
  display: flex;
  align-items: center;
  height: 24px;
  padding: 0 6px 0 10px;
  border-right: 1px solid #d4d4d4;
}
.wide {
  gap: 15px;
}
.pos {
  gap: 13px;
  padding: 0 10px;
}
.check {
  gap: 4px;
  padding: 0 10px 0 9px;
}
.views {
  display: flex;
  gap: 2px;
  margin-left: auto;
  padding-right: 9px;
  border-right: 1px solid #d4d4d4;
}
.views button {
  width: 24px;
  height: 24px;
  border-radius: 4px;
}
.views .on {
  background: #bababa;
}
.zoom {
  display: flex;
  align-items: center;
  padding: 0 14px 0 12px;
}
.pct {
  display: flex;
  align-items: center;
  gap: 4px;
  margin-right: 8px;
}
.pct select {
  padding: 0;
  border: 0;
  background: none;
  appearance: none;
  color: #555;
  font: inherit;
}
.zoom input {
  width: 130px;
  height: 14px;
  margin: 0 13px;
  background: linear-gradient(90deg, #666 50%, #b4b4b4 50%) center / 100% 1px no-repeat;
  appearance: none;
}
.zoom input::-webkit-slider-thumb {
  width: 13px;
  height: 13px;
  border: 1px solid #555;
  border-radius: 50%;
  background: #e8e8e8;
  box-sizing: border-box;
  appearance: none;
}
.zoom button:last-child {
  margin-left: 10px;
}

/* taskbar */
.taskbar {
  display: flex;
  flex: none;
  align-items: center;
  height: 40px;
  background: #d2d2d2;
}
.bar {
  width: 2px;
  height: 24px;
  background: #666;
}
.app-btn {
  width: 40px;
  height: 40px;
}
.app-btn span {
  padding: 4px;
  border-radius: 7px;
}
.app-btn.open span {
  background: #939393;
}
.app-btn.current span {
  background: #2a2a2a;
}
.tray {
  display: flex;
  align-items: center;
  margin-left: auto;
}
.tray-set {
  display: flex;
  padding: 0 5px;
}
.tray-set button {
  width: 30px;
  height: 40px;
}
.clock {
  display: flex;
  flex-direction: column;
  align-items: center;
  width: 56px;
  margin-right: 9px;
  color: #1c1c1c;
  font-family: "Open Sans", "Noto Sans", sans-serif;
}
.clock b {
  font-size: 16px;
  font-weight: 400;
  line-height: 20px;
}
.clock span {
  font-size: 9px;
  line-height: 14px;
}
.desktop {
  width: 11px;
  height: 40px;
  border: 1px solid #b8b8b8;
}
</style>
